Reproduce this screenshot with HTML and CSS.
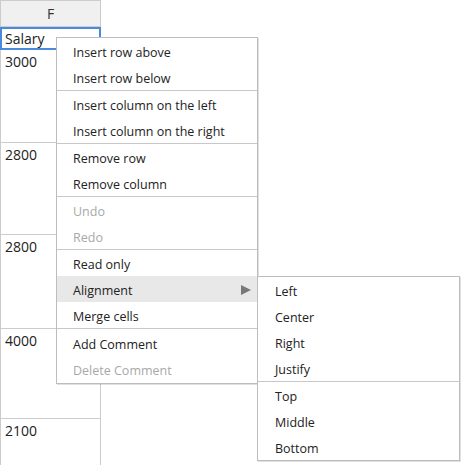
FILE: index.html
```html
<!DOCTYPE html>
<html>
<head>
<meta charset="utf-8">
<link rel="stylesheet" href="styles.css">
</head>
<body>
<div class="sheet">
  <div class="col">
    <div class="head">F</div>
    <div class="cell current">Salary</div>
    <div class="cell r1">3000</div>
    <div class="cell r2">2800</div>
    <div class="cell r3">2800</div>
    <div class="cell r4">4000</div>
    <div class="cell r5">2100</div>
  </div>
</div>

<div class="menu">
  <div class="group">
    <div class="item">Insert row above</div>
    <div class="item">Insert row below</div>
  </div>
  <div class="group">
    <div class="item">Insert column on the left</div>
    <div class="item">Insert column on the right</div>
  </div>
  <div class="group">
    <div class="item">Remove row</div>
    <div class="item">Remove column</div>
  </div>
  <div class="group">
    <div class="item disabled">Undo</div>
    <div class="item disabled">Redo</div>
  </div>
  <div class="group">
    <div class="item">Read only</div>
    <div class="item active">Alignment<span class="arrow"></span></div>
    <div class="item">Merge cells</div>
  </div>
  <div class="group last">
    <div class="item">Add Comment</div>
    <div class="item disabled">Delete Comment</div>
  </div>
</div>

<div class="menu submenu">
  <div class="group">
    <div class="item">Left</div>
    <div class="item">Center</div>
    <div class="item">Right</div>
    <div class="item">Justify</div>
  </div>
  <div class="group">
    <div class="item">Top</div>
    <div class="item">Middle</div>
    <div class="item">Bottom</div>
  </div>
</div>
</body>
</html>
```

FILE: styles.css
```css
html, body {
  margin: 0;
  padding: 0;
  background: #fff;
}
body {
  font-family: "Open Sans", "Noto Sans", sans-serif;
  color: #222;
  width: 465px;
  height: 465px;
  overflow: hidden;
  position: relative;
}
.sheet {
  display: flex;
}
.col {
  width: 101px;
  box-sizing: border-box;
  border-left: 1px solid #ccc;
  border-right: 1px solid #ccc;
  display: flex;
  flex-direction: column;
}
.head {
  height: 27px;
  box-sizing: border-box;
  background: #f0f0f0;
  border-top: 1px solid #ccc;
  border-bottom: 1px solid #ccc;
  font-size: 14px;
  line-height: 26px;
  text-align: center;
  color: #333;
}
.cell {
  box-sizing: border-box;
  border-bottom: 1px solid #ccc;
  font-size: 14px;
  line-height: 19px;
  padding: 2px 4px 0;
}
.cell.current {
  height: 23px;
  margin: 0 -1px;
  border: 2px solid #4b89dc;
  padding: 0 0 0 3px;
  line-height: 19px;
}
.r1 { height: 93px; padding-top: 2px; }
.r2 { height: 92px; }
.r3 { height: 94px; }
.r4 { height: 90px; }
.r5 { height: 60px; border-bottom: none; }

.menu {
  position: absolute;
  left: 56px;
  top: 37px;
  width: 202px;
  box-sizing: border-box;
  background: #fff;
  border: 1px solid #bdbdbd;
  box-shadow: 1px 1px 0 rgba(0, 0, 0, 0.12);
  font-size: 12.5px;
}
.group + .group {
  border-top: 1px solid #c8c8c8;
}
.group.last {
  padding-top: 1px;
  padding-bottom: 1px;
}
.item {
  height: 26px;
  line-height: 22px;
  padding: 4px 16px 0;
  box-sizing: border-box;
  color: #222;
  position: relative;
  white-space: nowrap;
}
.item.disabled {
  color: #a8a8a8;
}
.item.active {
  background: #e8e8e8;
}
.arrow {
  position: absolute;
  right: 6px;
  top: 9px;
  width: 0;
  height: 0;
  border-top: 5px solid transparent;
  border-bottom: 5px solid transparent;
  border-left: 10px solid #787878;
}
.submenu {
  left: 257px;
  top: 276px;
  width: 203px;
}
.submenu .item {
  padding-left: 17px;
}
```
